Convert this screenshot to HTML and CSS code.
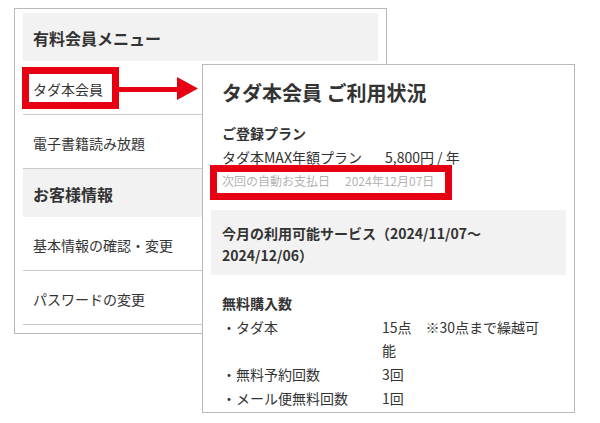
FILE: index.html
```html
<!DOCTYPE html>
<html lang="ja">
<head>
<meta charset="utf-8">
<title>タダ本会員 ご利用状況</title>
<link rel="stylesheet" href="styles.css">
</head>
<body>
<div class="stage">
  <nav class="menu">
    <div class="menu-head">有料会員メニュー</div>
    <div class="menu-item">タダ本会員</div>
    <div class="menu-item">電子書籍読み放題</div>
    <div class="menu-head">お客様情報</div>
    <div class="menu-item">基本情報の確認・変更</div>
    <div class="menu-item">パスワードの変更</div>
  </nav>

  <section class="status">
    <h2 class="status-title">タダ本会員 ご利用状況</h2>
    <div class="plan">
      <h3 class="sub-title">ご登録プラン</h3>
      <p class="plan-row"><span class="plan-name">タダ本MAX年額プラン</span><span>5,800円 / 年</span></p>
      <p class="next-pay">次回の自動お支払日<span class="next-date">2024年12月07日</span></p>
    </div>
    <div class="services">今月の利用可能サービス（2024/11/07〜<br>2024/12/06）</div>
    <div class="free">
      <h3 class="sub-title">無料購入数</h3>
      <dl class="free-list">
        <dt>・タダ本</dt><dd>15点　※30点まで繰越可能</dd>
        <dt>・無料予約回数</dt><dd>3回</dd>
        <dt>・メール便無料回数</dt><dd>1回</dd>
      </dl>
    </div>
  </section>

  <div class="mark mark-menu"></div>
  <svg class="arrow" width="80" height="24" viewBox="0 0 80 24">
    <rect x="0" y="10" width="59" height="5" fill="#e60012"/>
    <polygon points="58,0 79,11.5 58,23" fill="#e60012"/>
  </svg>
  <div class="mark mark-date"></div>
</div>
</body>
</html>
```

FILE: styles.css
```css
* { box-sizing: border-box; }

html, body {
  margin: 0;
  padding: 0;
  background: #fff;
}

body {
  font-family: "Noto Sans CJK JP", "Noto Sans", sans-serif;
  color: #333;
  font-size: 14px;
}

.stage {
  position: relative;
  width: 600px;
  height: 423px;
  overflow: hidden;
}

/* left menu */
.menu {
  margin: 8px 0 0 14px;
  width: 373px;
  border: 1px solid #b9b9b9;
  padding: 4px 8px 8px;
  background: #fff;
}

.menu-head {
  height: 48px;
  background: #f2f2f2;
  padding: 2px 0 0 10px;
  display: flex;
  align-items: center;
  font-size: 16px;
  font-weight: 700;
}

.menu-item {
  height: 54px;
  border-bottom: 1px solid #c9c9c9;
  padding: 2px 0 0 10px;
  display: flex;
  align-items: center;
  font-size: 14px;
}

/* right status window */
.status {
  position: absolute;
  left: 202px;
  top: 64px;
  width: 373px;
  height: 349px;
  border: 1px solid #b9b9b9;
  background: #fff;
  padding: 0 8px;
  overflow: hidden;
}

.status-title {
  margin: 14px 0 0;
  padding-left: 11px;
  font-size: 20px;
  line-height: 28px;
  font-weight: 700;
}

.plan {
  margin-top: 14px;
  padding-left: 11px;
}

.sub-title {
  margin: 0;
  font-size: 14px;
  line-height: 24px;
  font-weight: 700;
}

.plan-row {
  margin: 0;
  line-height: 24px;
}

.plan-name {
  display: inline-block;
  width: 163px;
}

.next-pay {
  margin: 0;
  font-size: 12px;
  line-height: 24px;
  color: #b3b3b3;
}

.next-date {
  margin-left: 15px;
}

.services {
  margin-top: 17px;
  background: #f2f2f2;
  padding: 12px 11px 9px;
  font-weight: 700;
  line-height: 22px;
}

.free {
  margin-top: 16px;
  padding-left: 11px;
}

.free-list {
  margin: 0;
  display: grid;
  grid-template-columns: 160px 166px;
  row-gap: 1px;
  padding-top: 1px;
  line-height: 23px;
}

.free-list dt,
.free-list dd {
  margin: 0;
}

/* annotations */
.mark {
  position: absolute;
  border: 7px solid #e60012;
}

.mark-menu {
  left: 22px;
  top: 67px;
  width: 97px;
  height: 42px;
}

.mark-date {
  left: 210px;
  top: 165px;
  width: 242px;
  height: 35px;
}

.arrow {
  position: absolute;
  left: 119px;
  top: 77px;
}
```
